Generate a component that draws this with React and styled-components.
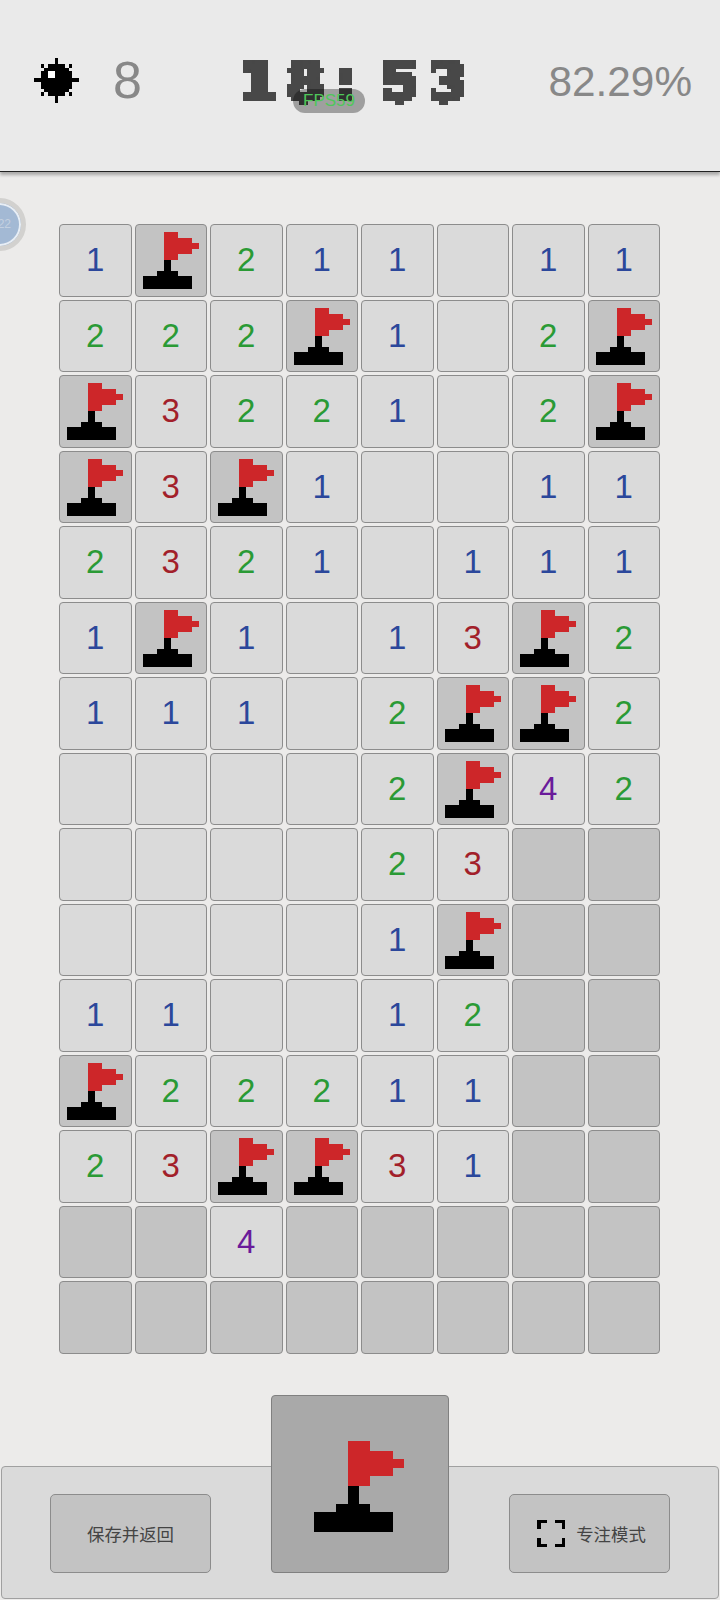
import React from 'react'
import styled, { createGlobalStyle } from 'styled-components'

const GlobalStyle = createGlobalStyle`
  html, body {
    margin: 0;
    padding: 0;
    background: #ecebea;
  }
  * {
    box-sizing: border-box;
  }
`

const Page = styled.div`
  position: relative;
  width: 720px;
  height: 1600px;
  overflow: hidden;
  font-family: "Liberation Sans", "Noto Sans CJK SC", sans-serif;
`

const Header = styled.header`
  position: relative;
  display: flex;
  align-items: center;
  height: 172px;
  padding: 0 28px 11px 34px;
  background: #eaeaea;
  border-bottom: 1.5px solid #222;
  box-shadow: 0 3px 3px rgba(0, 0, 0, 0.28);
`

const MineCount = styled.span`
  margin-left: 34px;
  width: 27px;
  font-size: 52px;
  line-height: 60px;
  color: #888;
`

const Timer = styled.div`
  display: flex;
  margin: 3px 0 0 99px;
  width: 240px;
  height: 60px;
  font-family: "DejaVu Sans", sans-serif;
  font-weight: 700;
  font-size: 54px;
  line-height: 60px;
  color: #484848;
  -webkit-text-stroke: 3px #484848;
  filter: url(#pixelate);
`

const TimerChar = styled.span`
  flex: none;
  width: 47.5px;
`

const Percent = styled.span`
  margin-left: auto;
  margin-top: 4px;
  font-size: 42.3px;
  line-height: 50px;
  color: #888;
`

const FpsPill = styled.div`
  position: absolute;
  left: 293px;
  top: 89px;
  width: 72px;
  height: 24px;
  border-radius: 12px;
  background: rgba(0, 0, 0, 0.32);
  color: #4fc75a;
  font-size: 17px;
  line-height: 24px;
  text-align: center;
`

const Badge = styled.div`
  position: absolute;
  left: -27px;
  top: 198px;
  width: 53px;
  height: 53px;
  border-radius: 50%;
  border: 5px solid #d2d1cf;
  background: #a3b9d4;
  box-shadow: inset 0 0 0 2px #e8eef5;
  color: #c3d0e0;
  font-size: 12px;
  line-height: 43px;
  text-align: right;
  padding-right: 10px;
`

const Board = styled.main`
  display: grid;
  grid-template-columns: repeat(8, 72.5px);
  grid-auto-rows: 72.5px;
  gap: 3px;
  padding: 52px 0 0 59px;
`

const numberColors = {
  1: '#2b479b',
  2: '#2a9a35',
  3: '#a21f2a',
  4: '#6a1b9a',
}

const Cell = styled.div`
  display: flex;
  align-items: center;
  justify-content: center;
  border: 1px solid #8c8c8c;
  border-radius: 4px;
  background: ${p => (p.$covered ? '#c3c3c3' : '#dadada')};
  color: ${p => numberColors[p.$value] || '#000'};
  font-size: 33px;
`

const FlagSvg = styled.svg`
  flex: none;
  display: block;
  width: ${p => p.$size}px;
  height: ${p => p.$size}px;
`

const BottomBar = styled.footer`
  display: flex;
  align-items: flex-end;
  justify-content: space-between;
  width: 718px;
  height: 133px;
  margin: 112.5px 0 0 1px;
  padding: 0 48px 25px;
  background: #dadada;
  border: 1px solid #a0a0a0;
  border-radius: 4px;
`

const ActionButton = styled.button`
  display: flex;
  align-items: center;
  justify-content: center;
  gap: 11px;
  width: 161px;
  height: 79px;
  padding: 0 0 0 ${p => (p.$shifted ? 4 : 0)}px;
  border: 1px solid #8c8c8c;
  border-radius: 5px;
  background: #c3c3c3;
  color: #444;
  font-family: "Noto Sans CJK SC", sans-serif;
  font-size: 17.4px;
`

const ModeButton = styled.button`
  display: flex;
  align-items: center;
  justify-content: center;
  width: 178px;
  height: 178px;
  padding: 3px 2px 0 0;
  margin-top: -71px;
  border: 1px solid #808080;
  border-radius: 4px;
  background: #a9a9a9;
`

const board = [
  '1F211_11',
  '222F1_2F',
  'F3221_2F',
  'F3F1__11',
  '2321_111',
  '1F1_13F2',
  '111_2FF2',
  '____2F42',
  '____23HH',
  '____1FHH',
  '11__12HH',
  'F22211HH',
  '23FF31HH',
  'HH4HHHHH',
  'HHHHHHHH',
]

function Flag({ size }) {
  return (
    <FlagSvg $size={size} viewBox="0 0 72 72" shapeRendering="crispEdges">
      <path fill="#cd2629" d="M29 8h14v6h14v5h7v6h-7v5H43v6H29z" />
      <path fill="#000" d="M29 36h7v11h7v5h14v12.5H8V52h14v-5h7z" />
    </FlagSvg>
  )
}

function MineIcon() {
  return (
    <svg width="45" height="46" viewBox="0 0 13 13" shapeRendering="crispEdges">
      <path
        fill="#000"
        d="M6 0h1v2h2v1h1v1h1v2h2v1h-2v2h-1v1H9v1H7v2H6v-2H4v-1H3V9H2V7H0V6h2V4h1V3h1V2h2zM2 2h1v1H2zM10 2h1v1h-1zM2 10h1v1H2zM10 10h1v1h-1z"
      />
      <path fill="#fff" d="M4 4h2v2H4z" />
    </svg>
  )
}

function FocusIcon() {
  return (
    <svg width="28" height="27" viewBox="0 0 28 27" shapeRendering="crispEdges">
      <path
        fill="#000"
        d="M0 0h10v3H4v6H0zM18 0h10v9h-3V3h-7zM0 18h4v6h6v3H0zM25 18h3v9H18v-3h7z"
      />
    </svg>
  )
}

export default function App() {
  return (
    <Page>
      <GlobalStyle />
      <svg width="0" height="0" style={{ position: 'absolute' }}>
        <filter id="pixelate" x="0" y="0" width="100%" height="100%" colorInterpolationFilters="sRGB">
          <feFlood x="2" y="2" width="1" height="1" />
          <feComposite width="4" height="4" />
          <feTile result="grid" />
          <feComposite in="SourceGraphic" in2="grid" operator="in" />
          <feMorphology operator="dilate" radius="2" />
          <feComponentTransfer>
            <feFuncA type="discrete" tableValues="0 1 1 1" />
          </feComponentTransfer>
        </filter>
      </svg>

      <Header>
        <MineIcon />
        <MineCount>8</MineCount>
        <Timer>
          {'18:53'.split('').map((c, i) => (
            <TimerChar key={i}>{c}</TimerChar>
          ))}
        </Timer>
        <Percent>82.29%</Percent>
        <FpsPill>FPS59</FpsPill>
      </Header>

      <Badge>22</Badge>

      <Board>
        {board.map((row, r) =>
          row.split('').map((c, i) => {
            const key = r + '-' + i
            if (c === 'F') {
              return (
                <Cell key={key} $covered>
                  <Flag size={72} />
                </Cell>
              )
            }
            if (c === 'H') return <Cell key={key} $covered />
            return (
              <Cell key={key} $value={c}>
                {c === '_' ? '' : c}
              </Cell>
            )
          })
        )}
      </Board>

      <BottomBar>
        <ActionButton>保存并返回</ActionButton>
        <ModeButton>
          <Flag size={116} />
        </ModeButton>
        <ActionButton $shifted>
          <FocusIcon />
          专注模式
        </ActionButton>
      </BottomBar>
    </Page>
  )
}
